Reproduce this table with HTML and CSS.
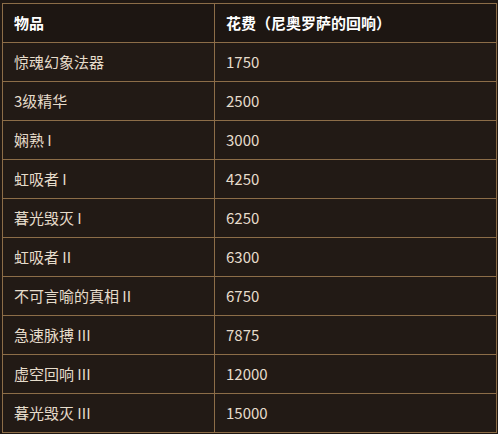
FILE: index.html
```html
<!DOCTYPE html>
<html lang="zh">
<head>
<meta charset="utf-8">
<link rel="stylesheet" href="styles.css">
</head>
<body>
<table class="cost-table">
  <thead>
    <tr><th class="col-item">物品</th><th>花费（尼奥罗萨的回响）</th></tr>
  </thead>
  <tbody>
    <tr><td>惊魂幻象法器</td><td>1750</td></tr>
    <tr><td>3级精华</td><td>2500</td></tr>
    <tr><td>娴熟 I</td><td>3000</td></tr>
    <tr><td>虹吸者 I</td><td>4250</td></tr>
    <tr><td>暮光毁灭 I</td><td>6250</td></tr>
    <tr><td>虹吸者 II</td><td>6300</td></tr>
    <tr><td>不可言喻的真相 II</td><td>6750</td></tr>
    <tr><td>急速脉搏 III</td><td>7875</td></tr>
    <tr><td>虚空回响 III</td><td>12000</td></tr>
    <tr><td>暮光毁灭 III</td><td>15000</td></tr>
  </tbody>
</table>
</body>
</html>
```

FILE: styles.css
```css
html, body {
  background: #201813;
}
body {
  margin: 3px 0 0 2px;
  font-family: "Noto Sans CJK SC", "Noto Sans", sans-serif;
}
.cost-table {
  border-collapse: collapse;
  width: 495px;
  background: #221a15;
}
.cost-table th,
.cost-table td {
  border: 1px solid #8c6d48;
  height: 38px;
  padding: 0 11px;
  text-align: left;
  font-size: 15px;
  line-height: 20px;
  vertical-align: middle;
}
.cost-table th {
  color: #ffffff;
  font-weight: bold;
  background: #1d1612;
}
.cost-table td {
  color: #e6dccb;
  font-weight: normal;
}
.col-item {
  width: 189px;
}
```
